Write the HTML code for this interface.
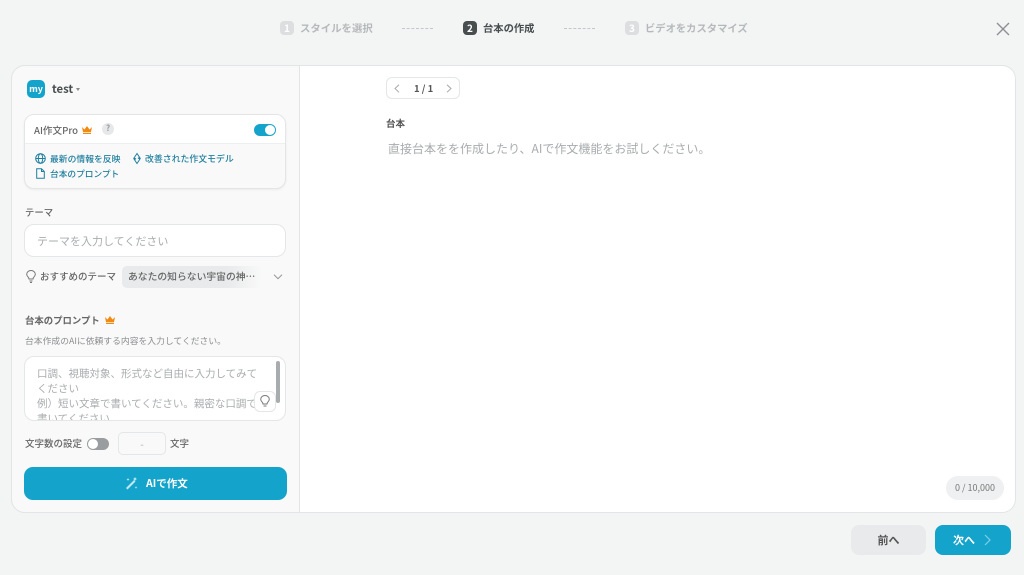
<!DOCTYPE html>
<html lang="ja"><head><meta charset="utf-8"><style>
*{box-sizing:border-box}
html,body{margin:0;padding:0}
body{width:1024px;height:575px;background:#f3f5f5;overflow:hidden;position:relative;font-family:"Noto Sans CJK JP","Liberation Sans",sans-serif;color:#555}
.a{position:absolute;white-space:nowrap}
.t{position:absolute;white-space:nowrap;line-height:16px}
.num{position:absolute;width:14px;height:14px;border-radius:4px;top:21px;background:#dcdee0;color:#fff;font-size:10px;font-weight:700;line-height:14px;text-align:center}
.dash{position:absolute;top:28px;width:31px;border-top:1px dashed #c4c7c9}
svg{position:absolute;overflow:visible}
</style></head><body>
<div class="num" style="left:280px">1</div>
<div class="t" style="left:300px;top:20px;font-size:10.4px;font-weight:700;color:#b6b9bb">スタイルを選択</div>
<div class="dash" style="left:402px"></div>
<div class="num" style="left:463px;background:#484d50">2</div>
<div class="t" style="left:483px;top:20px;font-size:10.3px;font-weight:700;color:#484d50">台本の作成</div>
<div class="dash" style="left:564px"></div>
<div class="num" style="left:625px">3</div>
<div class="t" style="left:645px;top:20px;font-size:10.3px;font-weight:700;color:#b6b9bb">ビデオをカスタマイズ</div>
<svg style="left:996px;top:22px" width="14" height="14" fill="none" stroke="#8c9093" stroke-width="1.4"><path d="M1 1L13 13M13 1L1 13"/></svg>

<div class="a" style="left:11px;top:65px;width:1005px;height:448px;background:#fff;border:1px solid #e2e4e5;border-radius:14px"></div>
<div class="a" style="left:11px;top:65px;width:289px;height:448px;background:#f9f9f9;border:1px solid #e2e4e5;border-radius:14px 0 0 14px"></div>

<div class="a" style="left:27px;top:80px;width:18px;height:18px;border-radius:5px;background:#14a3cb;color:#fff;font-size:9px;font-weight:700;line-height:18px;text-align:center">my</div>
<div class="t" style="left:52px;top:81px;font-size:11.3px;font-weight:700;color:#484d50">test</div>
<div class="a" style="left:76px;top:88px;border-left:2px solid transparent;border-right:2px solid transparent;border-top:3px solid #888"></div>

<div class="a" style="left:24px;top:114px;width:262px;height:75px;background:#f9f9f9;border:1px solid #e3e5e6;border-radius:10px;box-shadow:0 1px 2px rgba(0,0,0,.06)"></div>
<div class="a" style="left:25px;top:115px;width:260px;height:29px;background:#fff;border-bottom:1px solid #eceeef;border-radius:9px 9px 0 0"></div>
<div class="t" style="left:34px;top:122px;font-size:9.6px;font-weight:500;color:#666">AI作文Pro</div>
<svg style="left:82px;top:126px" width="10" height="8" fill="#f08a12"><path d="M0 1L2.5 3.5L5 0L7.5 3.5L10 1L9 6H1ZM1 6.8H9V8H1Z"/></svg>
<div class="a" style="left:102px;top:123px;width:12px;height:12px;border-radius:6px;background:#e6e8e9;color:#999;font-size:8px;font-weight:700;line-height:12px;text-align:center">?</div>
<div class="a" style="left:254px;top:124px;width:22px;height:12px;border-radius:6px;background:#14a3cb"></div>
<div class="a" style="left:265px;top:125px;width:10px;height:10px;border-radius:5px;background:#fff"></div>

<svg style="left:35px;top:153px" width="11" height="11" fill="none" stroke="#1f7f9f" stroke-width="1"><circle cx="5.5" cy="5.5" r="4.8"/><ellipse cx="5.5" cy="5.5" rx="2.2" ry="4.8"/><path d="M.7 5.5H10.3"/></svg>
<div class="t" style="left:50px;top:151px;font-size:8.8px;font-weight:500;color:#1f7f9f">最新の情報を反映</div>
<svg style="left:133px;top:153px" width="8" height="11" fill="none" stroke="#1f7f9f" stroke-width="1"><path d="M4 .5L7 5H5L7 6L4 10.5L1 6H3L1 5Z"/></svg>
<div class="t" style="left:145px;top:151px;font-size:8.9px;font-weight:500;color:#1f7f9f">改善された作文モデル</div>
<svg style="left:36px;top:168px" width="9" height="11" fill="none" stroke="#1f7f9f" stroke-width="1"><path d="M.7.7H5.5L8.3 3.5V10.3H.7ZM5.5.7V3.5H8.3"/></svg>
<div class="t" style="left:50px;top:166px;font-size:8.7px;font-weight:500;color:#1f7f9f">台本のプロンプト</div>

<div class="t" style="left:25px;top:204px;font-size:9.4px;font-weight:500;color:#666">テーマ</div>
<div class="a" style="left:24px;top:224px;width:262px;height:33px;background:#fff;border:1px solid #e4e6e7;border-radius:10px"></div>
<div class="t" style="left:37px;top:233px;font-size:11px;color:#a9acae">テーマを入力してください</div>

<svg style="left:26px;top:270px" width="10" height="13" fill="none" stroke="#777" stroke-width="1"><path d="M3 9C3 7 .7 6.5.7 4.2A4.3 3.7 0 0 1 9.3 4.2C9.3 6.5 7 7 7 9ZM3.5 11H6.5M4 12.5H6"/></svg>
<div class="t" style="left:40px;top:268px;font-size:9.5px;font-weight:500;color:#666">おすすめのテーマ</div>
<div class="a" style="left:122px;top:266px;width:140px;height:22px;border-radius:5px;background:linear-gradient(90deg,#e8eaeb 75%,#f9f9f9)"></div>
<div class="t" style="left:128px;top:268px;font-size:9.8px;font-weight:500;color:#666">あなたの知らない宇宙の神…</div>
<svg style="left:273px;top:274px" width="10" height="6" fill="none" stroke="#8c9093" stroke-width="1"><path d="M1 .7L5 4.7L9 .7"/></svg>

<div class="t" style="left:25px;top:312px;font-size:9.4px;font-weight:700;color:#666">台本のプロンプト</div>
<svg style="left:105px;top:316px" width="10" height="8" fill="#f08a12"><path d="M0 1L2.5 3.5L5 0L7.5 3.5L10 1L9 6H1ZM1 6.8H9V8H1Z"/></svg>
<div class="t" style="left:25px;top:333px;font-size:8.8px;color:#8b8e90">台本作成のAIに依頼する内容を入力してください。</div>

<div class="a" style="left:24px;top:356px;width:262px;height:65px;background:#fff;border:1px solid #e4e6e7;border-radius:10px;overflow:hidden">
<div style="position:absolute;left:12px;top:9px;width:223px;font-size:10.5px;line-height:15px;color:#a9acae;white-space:normal">口調、視聴対象、形式など自由に入力してみてください<br>例）短い文章で書いてください。親密な口調で書いてください</div>
</div>
<div class="a" style="left:276px;top:361px;width:4px;height:42px;border-radius:2px;background:#a9acae"></div>
<div class="a" style="left:254px;top:391px;width:22px;height:21px;border-radius:6px;background:#fff;border:1px solid #e4e6e7"></div>
<svg style="left:260px;top:395px" width="10" height="13" fill="none" stroke="#777" stroke-width="1"><path d="M3 9C3 7 .7 6.5.7 4.2A4.3 3.7 0 0 1 9.3 4.2C9.3 6.5 7 7 7 9ZM3.5 11H6.5"/></svg>

<div class="t" style="left:25px;top:435px;font-size:9.5px;font-weight:500;color:#666">文字数の設定</div>
<div class="a" style="left:87px;top:438px;width:22px;height:12px;border-radius:6px;background:#9a9d9f"></div>
<div class="a" style="left:88px;top:439px;width:10px;height:10px;border-radius:5px;background:#fff"></div>
<div class="a" style="left:118px;top:432px;width:48px;height:23px;border:1px solid #e4e6e7;border-radius:5px;background:#f9f9f9;color:#a9acae;font-size:10px;line-height:21px;text-align:center">-</div>
<div class="t" style="left:170px;top:435px;font-size:9.5px;font-weight:500;color:#666">文字</div>

<div class="a" style="left:24px;top:467px;width:263px;height:33px;border-radius:9px;background:#14a3cb"></div>
<svg style="left:125px;top:477px" width="13" height="13" fill="#bfe8f3"><path d="M1 11L9 3L10.5 4.5L2.5 12.5ZM10 0L10.7 1.3L12 2L10.7 2.7L10 4L9.3 2.7L8 2L9.3 1.3ZM3 1L3.5 2L4.5 2.5L3.5 3L3 4L2.5 3L1.5 2.5L2.5 2ZM11 9L11.4 10L12.4 10.4L11.4 10.8L11 12L10.6 10.8L9.6 10.4L10.6 10Z"/></svg>
<div class="t" style="left:146px;top:476px;font-size:10.5px;font-weight:700;color:#fff">AIで作文</div>

<div class="a" style="left:386px;top:77px;width:74px;height:22px;background:#fff;border:1px solid #e4e6e7;border-radius:6px"></div>
<svg style="left:394px;top:84px" width="6" height="9" fill="none" stroke="#a5a8aa" stroke-width="1"><path d="M5 .7L1 4.5L5 8.3"/></svg>
<div class="t" style="left:414px;top:80px;font-size:9.5px;font-weight:700;color:#555">1 / 1</div>
<svg style="left:446px;top:84px" width="6" height="9" fill="none" stroke="#a5a8aa" stroke-width="1"><path d="M1 .7L5 4.5L1 8.3"/></svg>
<div class="t" style="left:386px;top:115px;font-size:9.5px;font-weight:700;color:#555">台本</div>
<div class="t" style="left:388px;top:141px;font-size:12px;color:#a9acae">直接台本をを作成したり、AIで作文機能をお試しください。</div>

<div class="a" style="left:946px;top:476px;width:58px;height:24px;border-radius:12px;background:#eff0f1;color:#777;font-size:9px;line-height:24px;text-align:center">0 / 10,000</div>

<div class="a" style="left:851px;top:525px;width:75px;height:30px;border-radius:8px;background:#e9eaec;color:#555;font-size:11px;font-weight:700;line-height:30px;text-align:center">前へ</div>
<div class="a" style="left:935px;top:525px;width:76px;height:30px;border-radius:8px;background:#14a3cb"></div>
<div class="t" style="left:953px;top:532px;font-size:11px;font-weight:700;color:#fff">次へ</div>
<svg style="left:984px;top:534px" width="7" height="12" fill="none" stroke="#7fcfe6" stroke-width="1.2"><path d="M1 1L6 6L1 11"/></svg>
</body></html>
